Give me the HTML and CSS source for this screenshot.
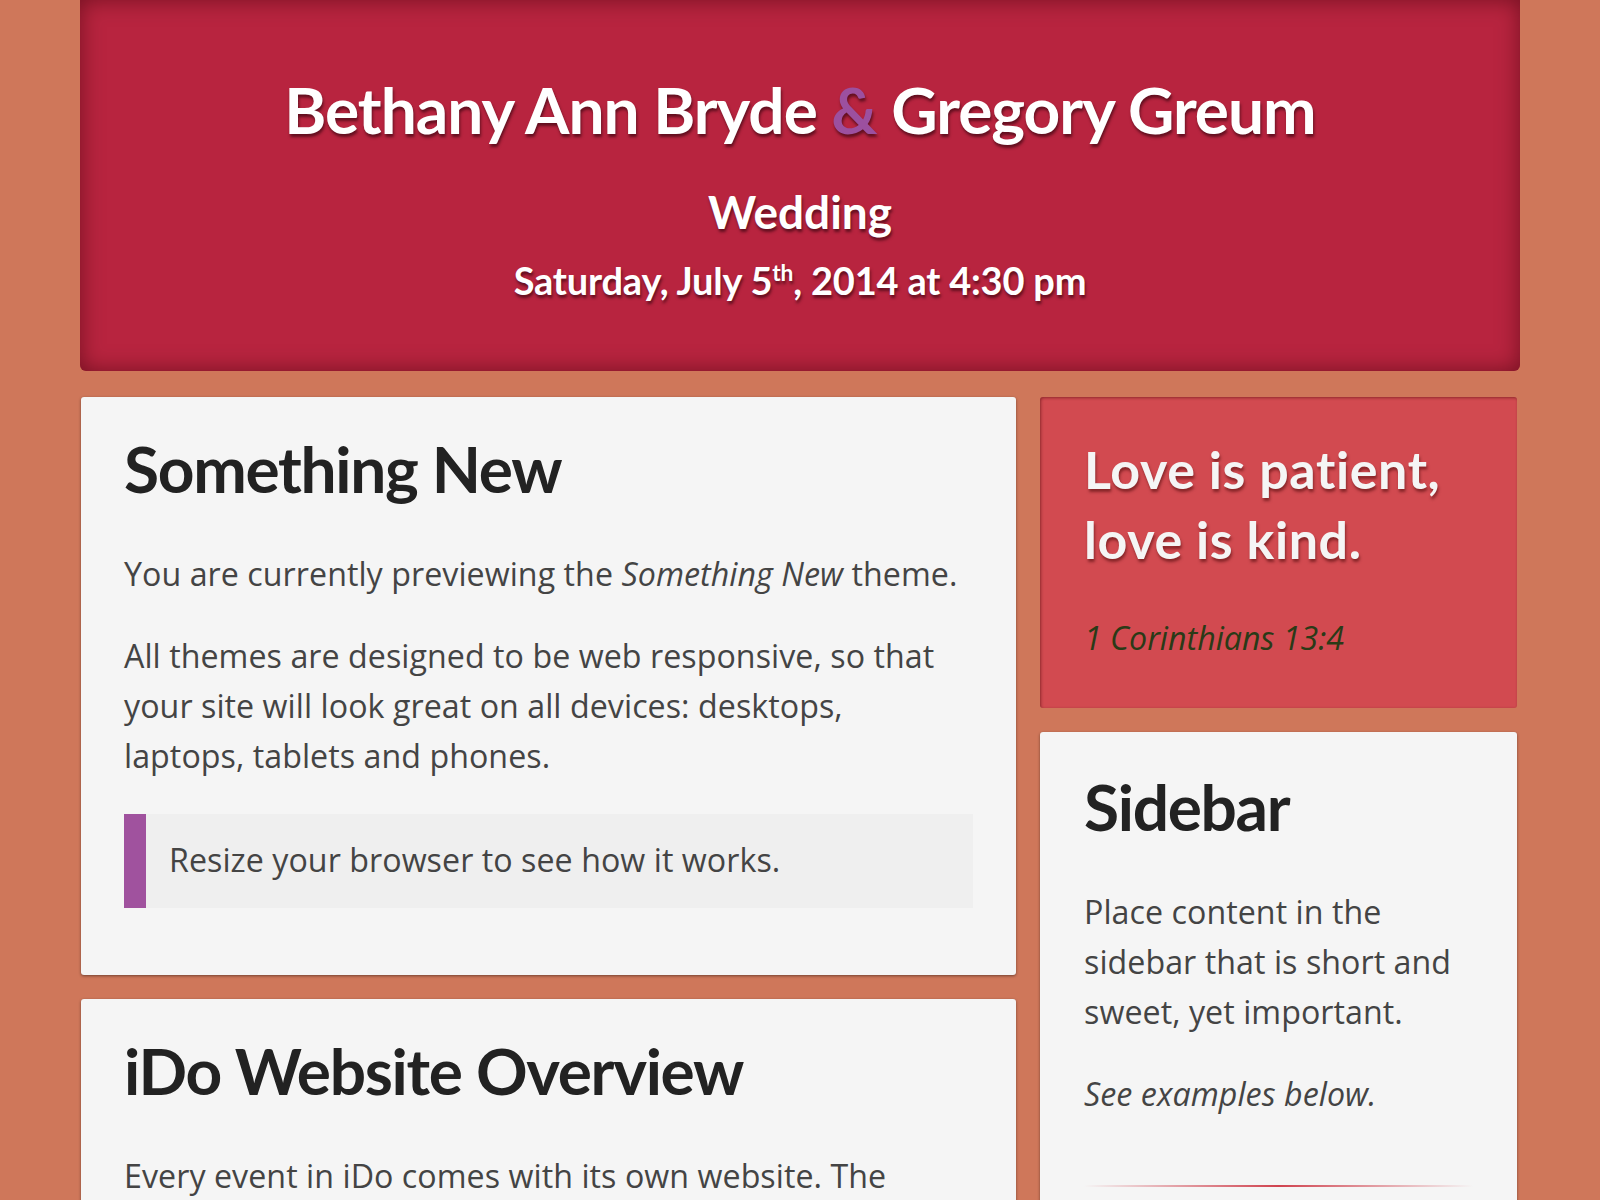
FILE: index.html
```html
<!DOCTYPE html>
<html lang="en">
<head>
<meta charset="utf-8">
<title>Bethany Ann Bryde &amp; Gregory Greum</title>
<link rel="stylesheet" href="styles.css">
</head>
<body>
<div class="page">
  <header class="masthead">
    <h1 class="names">Bethany Ann Bryde <span class="amp">&amp;</span> Gregory Greum</h1>
    <p class="event">Wedding</p>
    <p class="date">Saturday, July 5<sup>th</sup>, 2014 at 4:30 pm</p>
  </header>
  <div class="columns">
    <main class="main-col">
      <section class="card">
        <h2 class="card-title">Something New</h2>
        <p>You are currently previewing the <em>Something New</em> theme.</p>
        <p>All themes are designed to be web responsive, so that your site will look great on all devices: desktops, laptops, tablets and phones.</p>
        <blockquote class="note">Resize your browser to see how it works.</blockquote>
      </section>
      <section class="card">
        <h2 class="card-title">iDo Website Overview</h2>
        <p>Every event in iDo comes with its own website. The</p>
      </section>
    </main>
    <aside class="side-col">
      <section class="quote-card">
        <p class="verse">Love is patient, love is kind.</p>
        <p class="ref"><em>1 Corinthians 13:4</em></p>
      </section>
      <section class="card side-card">
        <h2 class="card-title">Sidebar</h2>
        <p>Place content in the sidebar that is short and sweet, yet important.</p>
        <p><em>See examples below.</em></p>
        <hr class="divider">
      </section>
    </aside>
  </div>
</div>
</body>
</html>
```
FILE: styles.css
```css
html, body {
  margin: 0;
  padding: 0;
}
body {
  background: #cf775a;
  font-family: "Open Sans", "Liberation Sans", sans-serif;
  color: #444;
  height: 1200px;
  overflow: hidden;
}
.page {
  width: 1440px;
  margin: 0 auto;
}
.masthead {
  height: 371px;
  box-sizing: border-box;
  padding-top: 72px;
  background: #b8243f;
  border-radius: 0 0 6px 6px;
  box-shadow: inset 0 0 22px rgba(60, 0, 10, 0.55);
  text-align: center;
  color: #fff;
  font-family: Lato, "Liberation Sans", sans-serif;
  font-weight: 700;
  text-shadow: 1px 3px 3px rgba(40, 0, 10, 0.6);
}
.names {
  margin: 0;
  font-size: 64px;
  line-height: 76px;
  font-weight: 700;
  letter-spacing: -1px;
}
.amp {
  color: #9c509f;
}
.event {
  margin: 38px 0 0;
  font-size: 46px;
  line-height: 52px;
}
.date {
  margin: 20px 0 0;
  font-size: 38px;
  line-height: 44px;
  letter-spacing: -0.2px;
}
.date sup {
  font-size: 0.6em;
  line-height: 0;
  vertical-align: 0.62em;
}
.columns {
  display: flex;
  align-items: flex-start;
  gap: 24px;
  margin-top: 26px;
  padding: 0 3px 0 1px;
}
.main-col {
  width: 935px;
  display: flex;
  flex-direction: column;
  gap: 24px;
}
.side-col {
  width: 477px;
  display: flex;
  flex-direction: column;
  gap: 24px;
}
.card {
  background: #f5f5f5;
  border-radius: 3px;
  box-shadow: 0 1px 3px rgba(0, 0, 0, 0.45);
  padding: 34px 43px 42px;
}
.card-title {
  margin: 0 0 42px;
  font-family: Lato, "Liberation Sans", sans-serif;
  font-weight: 700;
  font-size: 64px;
  line-height: 76px;
  color: #222;
  letter-spacing: -1.3px;
}
.card p {
  margin: 0 0 32px;
  max-width: 835px;
  font-size: 32.2px;
  line-height: 50px;
  letter-spacing: 0.05px;
}
.card p:last-child {
  margin-bottom: 0;
}
.note {
  margin: 33px 0 25px;
  padding: 21px 0 23px 23px;
  border-left: 22px solid #a0529e;
  background: #efefef;
  font-size: 32.2px;
  line-height: 50px;
  letter-spacing: 0.05px;
  color: #444;
}
.quote-card {
  background: #d24a50;
  border-radius: 3px;
  box-shadow: inset 1px 1px 3px rgba(60, 0, 0, 0.45);
  padding: 37px 44px 45px;
}
.verse {
  margin: 0 0 39px;
  font-family: Lato, "Liberation Sans", sans-serif;
  font-weight: 700;
  font-size: 52px;
  line-height: 70px;
  color: #f5f5f5;
  text-shadow: 1px 3px 3px rgba(60, 0, 0, 0.5);
  letter-spacing: 0.6px;
}
.ref {
  margin: 0;
  font-size: 32.2px;
  line-height: 50px;
  color: #2a3a17;
}
.side-card {
  padding: 37px 44px 60px;
}
.side-card p:last-of-type {
  margin-bottom: 0;
}
.divider {
  margin: 66px 0 0;
  border: 0;
  height: 2px;
  background: linear-gradient(to right, rgba(208, 67, 79, 0), #d0434f 50%, rgba(208, 67, 79, 0));
}
```
